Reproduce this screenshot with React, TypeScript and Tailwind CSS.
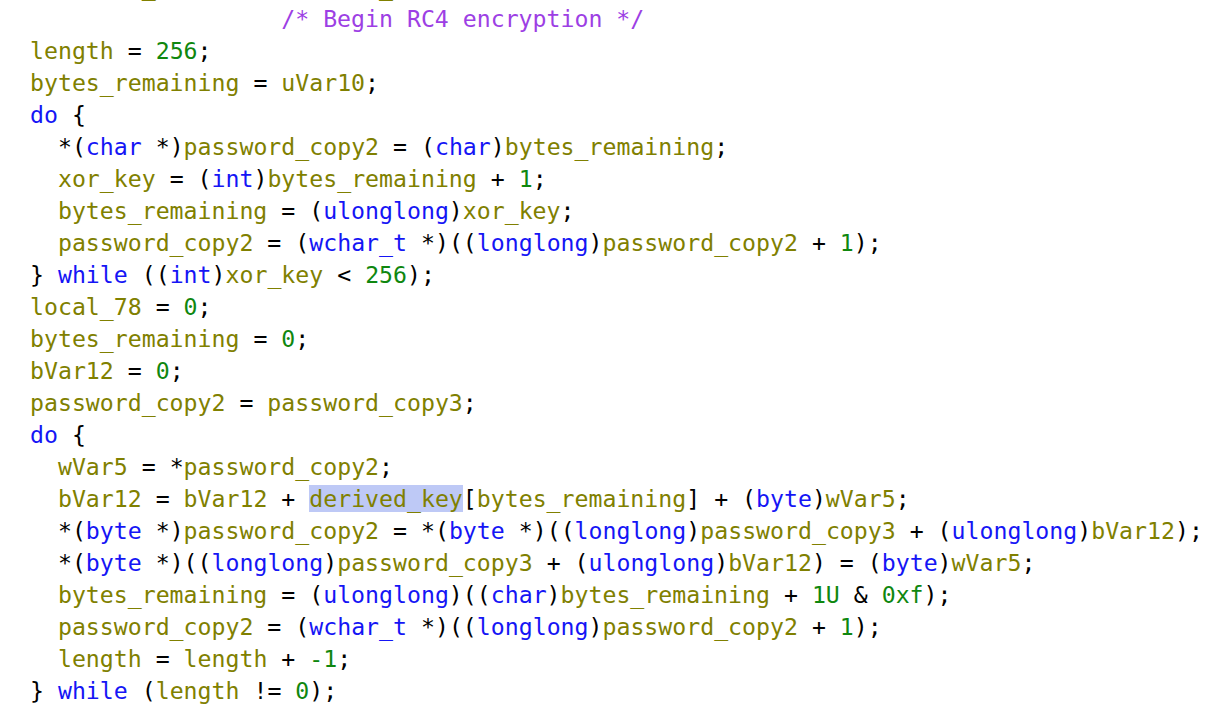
import React from 'react';

const TYPES = new Set(['do', 'while', 'char', 'int', 'ulonglong', 'wchar_t', 'longlong', 'byte']);

const lines = [
  'password_copy3 = password_copy2;',
  '                  /* Begin RC4 encryption */',
  'length = 256;',
  'bytes_remaining = uVar10;',
  'do {',
  '  *(char *)password_copy2 = (char)bytes_remaining;',
  '  xor_key = (int)bytes_remaining + 1;',
  '  bytes_remaining = (ulonglong)xor_key;',
  '  password_copy2 = (wchar_t *)((longlong)password_copy2 + 1);',
  '} while ((int)xor_key < 256);',
  'local_78 = 0;',
  'bytes_remaining = 0;',
  'bVar12 = 0;',
  'password_copy2 = password_copy3;',
  'do {',
  '  wVar5 = *password_copy2;',
  '  bVar12 = bVar12 + derived_key[bytes_remaining] + (byte)wVar5;',
  '  *(byte *)password_copy2 = *(byte *)((longlong)password_copy3 + (ulonglong)bVar12);',
  '  *(byte *)((longlong)password_copy3 + (ulonglong)bVar12) = (byte)wVar5;',
  '  bytes_remaining = (ulonglong)((char)bytes_remaining + 1U & 0xf);',
  '  password_copy2 = (wchar_t *)((longlong)password_copy2 + 1);',
  '  length = length + -1;',
  '} while (length != 0);',
];

const tokenRe = /(\/\*.*\*\/)|([A-Za-z_][A-Za-z0-9_]*)|(-?\d[A-Za-z0-9]*)|(\s+)|(.)/g;

function renderLine(line: string, row: number) {
  const out: React.ReactNode[] = [];
  let m: RegExpExecArray | null;
  let i = 0;
  tokenRe.lastIndex = 0;
  while ((m = tokenRe.exec(line)) !== null) {
    const [tok, comment, word, num, space] = m;
    let cls = 'text-black';
    if (comment) cls = 'text-[#9d3fe4]';
    else if (word) {
      if (TYPES.has(word)) cls = 'text-[#1515f5]';
      else if (word === 'derived_key' && row === 16) cls = 'text-[#808000] bg-[#bec9f6]';
      else cls = 'text-[#808000]';
    } else if (num) cls = 'text-[#0f870f]';
    else if (space) cls = '';
    out.push(
      <span key={i++} className={cls}>
        {tok}
      </span>
    );
  }
  return out;
}

export default function App() {
  return (
    <div className="h-screen w-full overflow-hidden bg-white">
      <div
        className="mt-[-29px] pl-[30px] flex flex-col text-[23.2px] leading-[32px] whitespace-pre"
        style={{ fontFamily: '"DejaVu Sans Mono", "Liberation Mono", monospace' }}
      >
        {lines.map((line, row) => (
          <div key={row} className="h-[32px]">
            {renderLine(line, row)}
          </div>
        ))}
      </div>
    </div>
  );
}
